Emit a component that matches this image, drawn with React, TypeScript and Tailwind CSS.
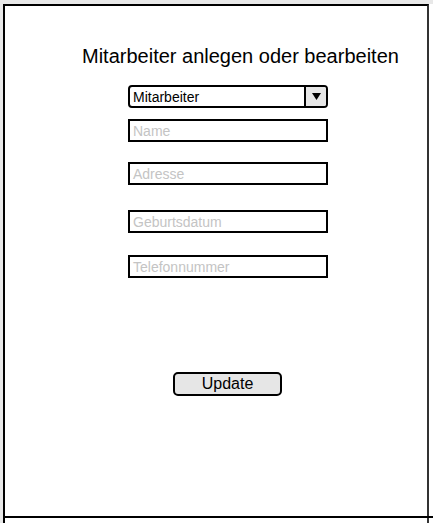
import React from "react";

const font = { fontFamily: '"Liberation Sans", Arial, sans-serif' };

function Field({ placeholder, className }: { placeholder: string; className: string }) {
  return (
    <div
      className={`w-[200px] h-[23px] border-2 border-black bg-white flex items-center pl-[3px] text-[14px] text-[#c4c4c4] leading-none ${className}`}
    >
      {placeholder}
    </div>
  );
}

export default function App() {
  return (
    <div className="w-[433px] h-[523px] bg-white relative overflow-hidden flex flex-col" style={font}>
      <div className="h-[4px] w-full bg-[#e8e8e8] shrink-0" />
      <div className="flex flex-1">
        <div className="w-[3px] bg-[#e8e8e8] shrink-0" />
        <div className="w-[426px] border-l-2 border-t-2 border-r-2 border-l-black border-t-black border-r-[#333] flex flex-col">
          <div className="mt-[38px] ml-[77px] text-[20px] leading-[24px] text-black whitespace-nowrap">
            Mitarbeiter anlegen oder bearbeiten
          </div>
          <div className="ml-[123px] mt-[17px] flex flex-col">
            <div className="w-[200px] h-[23px] border-2 border-black rounded-[4px] flex items-stretch overflow-hidden">
              <div className="flex-1 flex items-center pl-[3px] text-[14px] text-black leading-none">Mitarbeiter</div>
              <div className="w-[22px] border-l-2 border-black bg-[#e6e6e6] flex items-center justify-center">
                <svg width="9" height="7" viewBox="0 0 9 7">
                  <polygon points="0,0 9,0 4.5,7" fill="#000" />
                </svg>
              </div>
            </div>
            <Field placeholder="Name" className="mt-[11px]" />
            <Field placeholder="Adresse" className="mt-[20px]" />
            <Field placeholder="Geburtsdatum" className="mt-[25px]" />
            <Field placeholder="Telefonnummer" className="mt-[22px]" />
            <div className="ml-[45px] mt-[94px] w-[109px] h-[24px] border-2 border-black rounded-[5px] bg-[#e6e6e6] flex items-center justify-center text-[16px] text-black leading-none">
              Update
            </div>
          </div>
        </div>
        <div className="flex-1 bg-white" />
      </div>
      <div className="absolute top-[516px] left-[5px] right-0 h-[2px] bg-black" />
    </div>
  );
}
